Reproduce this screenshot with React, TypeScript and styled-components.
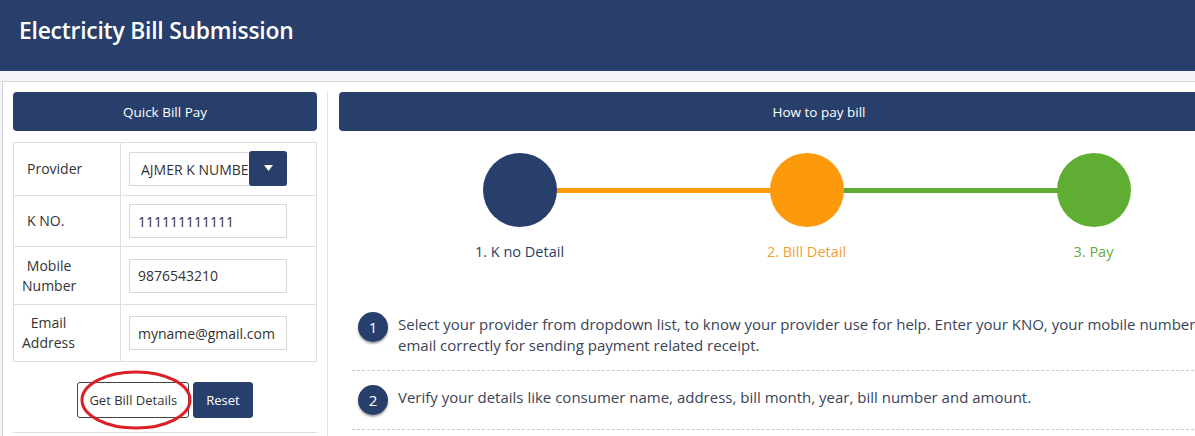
import React from "react";
import styled, { createGlobalStyle } from "styled-components";

const NAVY = "#283f6b";
const ORANGE = "#fd9a0c";
const GREEN = "#5fae33";

const Global = createGlobalStyle`
  * { box-sizing: border-box; }
  html, body { margin: 0; padding: 0; overflow: hidden; }
  body {
    background: #f3f4f9;
    font-family: "Open Sans", "Noto Sans", sans-serif;
    color: #333;
  }
`;

const Page = styled.div`
  width: 1330px;
`;

const TopBar = styled.header`
  height: 71px;
  background: ${NAVY};
  padding: 16px 0 0 19px;
`;

const Title = styled.h1`
  margin: 0;
  color: #fff;
  font-size: 22.8px;
  font-weight: 600;
  letter-spacing: -0.2px;
  line-height: 30px;
`;

const Card = styled.main`
  margin: 10px 0 0 2px;
  background: #fff;
  border: 1px solid #d3d3d8;
  padding: 10px;
  display: flex;
  align-items: stretch;
  height: 380px;
`;

const LeftCol = styled.section`
  width: 315px;
  flex: none;
  padding-right: 10px;
  border-right: 1px solid #e2e2e6;
`;

const RightCol = styled.section`
  width: 960px;
  flex: none;
  margin-left: 11px;
`;

const PanelHead = styled.div`
  height: 39px;
  border-radius: 4px;
  background: ${NAVY};
  color: #fff;
  font-size: 13.5px;
  display: flex;
  align-items: center;
  justify-content: center;
`;

const FormTable = styled.div`
  margin-top: 11px;
  border: 1px solid #dedede;
  display: grid;
  grid-template-columns: 107px 1fr;
`;

const LabelCell = styled.div<{ $h: number; $last?: boolean; $wrap?: boolean }>`
  height: ${(p) => p.$h}px;
  border-right: 1px solid #dedede;
  border-bottom: ${(p) => (p.$last ? "none" : "1px solid #dedede")};
  display: flex;
  align-items: center;
  padding-left: ${(p) => (p.$wrap ? 8 : 13)}px;
  font-size: 14px;
  line-height: 20px;
  color: #333;
  span {
    display: inline-block;
    text-align: ${(p) => (p.$wrap ? "center" : "left")};
  }
`;

const FieldCell = styled.div<{ $h: number; $last?: boolean }>`
  height: ${(p) => p.$h}px;
  border-bottom: ${(p) => (p.$last ? "none" : "1px solid #dedede")};
  display: flex;
  align-items: center;
  padding-left: 8px;
`;

const Input = styled.input`
  width: 158px;
  height: 34px;
  border: 1px solid #d8d8d8;
  padding: 0 8px;
  font-family: inherit;
  font-size: 14px;
  color: #333;
  outline: none;
`;

const SelectBox = styled.div`
  width: 158px;
  height: 34px;
  border: 1px solid #d8d8d8;
  display: flex;
  align-items: center;
`;

const SelectText = styled.span`
  flex: 1;
  overflow: hidden;
  white-space: nowrap;
  padding-left: 11px;
  font-size: 14px;
  color: #333;
`;

const DropBtn = styled.span`
  width: 38px;
  height: 35px;
  margin: -2px -1px 0 0;
  flex: none;
  background: ${NAVY};
  border-radius: 3px;
  display: flex;
  align-items: center;
  justify-content: center;
`;

const Actions = styled.div`
  margin-top: 20px;
  display: flex;
  justify-content: center;
  gap: 4px;
  padding-bottom: 14px;
  border-bottom: 1px solid #dedede;
`;

const BtnWrap = styled.div`
  position: relative;
`;

const Button = styled.button<{ $primary?: boolean }>`
  height: 36px;
  padding: 0 ${(p) => (p.$primary ? 12 : 11)}px;
  border-radius: 3px;
  font-family: inherit;
  font-size: 13px;
  border: 1px solid ${(p) => (p.$primary ? NAVY : "#444")};
  background: ${(p) => (p.$primary ? NAVY : "#fff")};
  color: ${(p) => (p.$primary ? "#fff" : "#333")};
`;

const Ring = styled.svg`
  position: absolute;
  left: 3px;
  top: -12px;
  pointer-events: none;
`;

const Tracker = styled.div`
  margin-top: 22px;
  padding-left: 37px;
  display: grid;
  grid-template-columns: repeat(3, 287px);
`;

const Step = styled.div<{ $line?: string }>`
  position: relative;
  display: flex;
  flex-direction: column;
  align-items: center;
  &::before {
    content: "";
    display: ${(p) => (p.$line ? "block" : "none")};
    position: absolute;
    left: 50%;
    width: 287px;
    top: 35px;
    height: 5px;
    background: ${(p) => p.$line};
  }
`;

const Dot = styled.div<{ $c: string }>`
  width: 74px;
  height: 74px;
  border-radius: 50%;
  background: ${(p) => p.$c};
  position: relative;
  z-index: 1;
`;

const StepLabel = styled.div<{ $c: string }>`
  margin-top: 14px;
  font-size: 14.5px;
  color: ${(p) => p.$c};
  line-height: 22px;
`;

const List = styled.ol`
  list-style: none;
  margin: 35px 0 0 13px;
  padding: 0;
`;

const Item = styled.li`
  display: flex;
  align-items: flex-start;
  padding: 14px 0 14px 6px;
  border-bottom: 1px dashed #c9c9c9;
`;

const Num = styled.span`
  width: 30px;
  height: 30px;
  flex: none;
  border-radius: 50%;
  background: ${NAVY};
  color: #fff;
  font-size: 15px;
  display: flex;
  align-items: center;
  justify-content: center;
  box-shadow: 0 2px 2px rgba(0, 0, 0, 0.35);
  margin-right: 10px;
`;

const ItemText = styled.p`
  margin: 0;
  font-size: 15px;
  line-height: 21px;
  color: #3a4457;
  padding-top: 2px;
`;

export default function App() {
  return (
    <Page>
      <Global />
      <TopBar>
        <Title>Electricity Bill Submission</Title>
      </TopBar>
      <Card>
        <LeftCol>
          <PanelHead>Quick Bill Pay</PanelHead>
          <FormTable>
            <LabelCell $h={53}><span>Provider</span></LabelCell>
            <FieldCell $h={53}>
              <SelectBox>
                <SelectText>AJMER K NUMBER</SelectText>
                <DropBtn>
                  <svg width="9" height="6" viewBox="0 0 9 6">
                    <path d="M0 0h9L4.5 6z" fill="#fff" />
                  </svg>
                </DropBtn>
              </SelectBox>
            </FieldCell>
            <LabelCell $h={51}><span>K NO.</span></LabelCell>
            <FieldCell $h={51}><Input defaultValue="111111111111" /></FieldCell>
            <LabelCell $h={58} $wrap><span>Mobile<br />Number</span></LabelCell>
            <FieldCell $h={58}><Input defaultValue="9876543210" /></FieldCell>
            <LabelCell $h={56} $wrap $last><span>Email<br />Address</span></LabelCell>
            <FieldCell $h={56} $last><Input defaultValue="myname@gmail.com" /></FieldCell>
          </FormTable>
          <Actions>
            <BtnWrap>
              <Button>Get Bill Details</Button>
              <Ring width="112" height="60" viewBox="0 0 112 60">
                <ellipse cx="56" cy="30" rx="54" ry="28" fill="none" stroke="#dc1f26" strokeWidth="3" />
              </Ring>
            </BtnWrap>
            <Button $primary>Reset</Button>
          </Actions>
        </LeftCol>
        <RightCol>
          <PanelHead>How to pay bill</PanelHead>
          <Tracker>
            <Step $line={ORANGE}>
              <Dot $c={NAVY} />
              <StepLabel $c={NAVY}>1. K no Detail</StepLabel>
            </Step>
            <Step $line={GREEN}>
              <Dot $c={ORANGE} />
              <StepLabel $c="#f0a033">2. Bill Detail</StepLabel>
            </Step>
            <Step>
              <Dot $c={GREEN} />
              <StepLabel $c="#66a844">3. Pay</StepLabel>
            </Step>
          </Tracker>
          <List>
            <Item>
              <Num>1</Num>
              <ItemText>
                Select your provider from dropdown list, to know your provider use for help. Enter your KNO, your mobile number and
                <br />
                email correctly for sending payment related receipt.
              </ItemText>
            </Item>
            <Item>
              <Num>2</Num>
              <ItemText>Verify your details like consumer name, address, bill month, year, bill number and amount.</ItemText>
            </Item>
          </List>
        </RightCol>
      </Card>
    </Page>
  );
}
